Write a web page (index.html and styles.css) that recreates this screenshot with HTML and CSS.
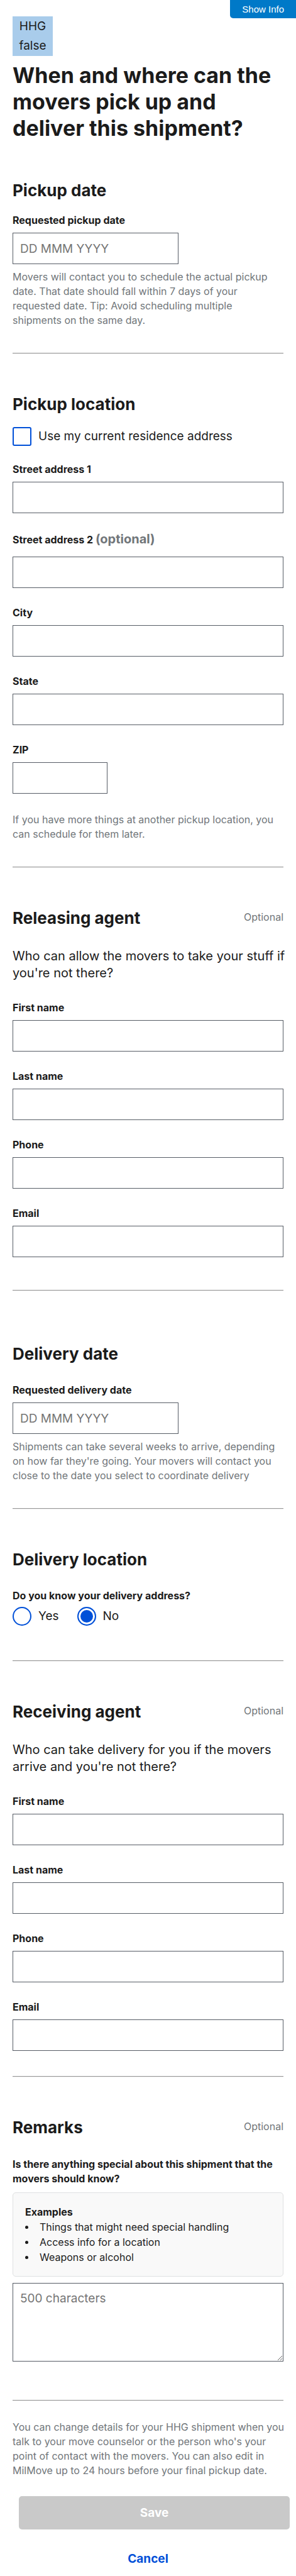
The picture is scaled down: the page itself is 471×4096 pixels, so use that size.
FILE: index.html
```html
<!DOCTYPE html>
<html lang="en">
<head>
<meta charset="utf-8">
<meta name="viewport" content="width=device-width, initial-scale=1">
<title>Shipment details</title>
<link rel="stylesheet" href="styles.css">
</head>
<body>
<button type="button" class="show-info">Show Info</button>
<main class="page">
  <div class="tag"><span>HHG</span><span>false</span></div>
  <h1 class="title">When and where can the movers pick up and deliver this shipment?</h1>
  <form class="form">
    <section class="section section-first">
      <h2 class="heading">Pickup date</h2>
      <div class="field field-tight">
        <label class="label" for="pickup-date">Requested pickup date</label>
        <input class="input input-date" id="pickup-date" type="text" placeholder="DD MMM YYYY">
      </div>
      <p class="hint">Movers will contact you to schedule the actual pickup date. That date should fall within 7 days of your requested date. Tip: Avoid scheduling multiple shipments on the same day.</p>
    </section>
    <hr class="rule">
    <section class="section">
      <h2 class="heading">Pickup location</h2>
      <div class="choice choice-check">
        <input class="check" id="use-current" type="checkbox">
        <label class="choice-label" for="use-current">Use my current residence address</label>
      </div>
      <div class="field">
        <label class="label" for="street1">Street address 1</label>
        <input class="input" id="street1" type="text">
      </div>
      <div class="field">
        <label class="label label-optional" for="street2">Street address 2 <span class="optional-inline">(optional)</span></label>
        <input class="input" id="street2" type="text">
      </div>
      <div class="field">
        <label class="label" for="city">City</label>
        <input class="input" id="city" type="text">
      </div>
      <div class="field">
        <label class="label" for="state">State</label>
        <input class="input" id="state" type="text">
      </div>
      <div class="field">
        <label class="label" for="zip">ZIP</label>
        <input class="input input-zip" id="zip" type="text">
      </div>
      <p class="hint hint-spaced">If you have more things at another pickup location, you can schedule for them later.</p>
    </section>
    <hr class="rule">
    <section class="section">
      <div class="heading-row">
        <h2 class="heading">Releasing agent</h2>
        <span class="optional">Optional</span>
      </div>
      <p class="lead">Who can allow the movers to take your stuff if you're not there?</p>
      <div class="field">
        <label class="label" for="rel-first">First name</label>
        <input class="input" id="rel-first" type="text">
      </div>
      <div class="field">
        <label class="label" for="rel-last">Last name</label>
        <input class="input" id="rel-last" type="text">
      </div>
      <div class="field">
        <label class="label" for="rel-phone">Phone</label>
        <input class="input" id="rel-phone" type="tel">
      </div>
      <div class="field">
        <label class="label" for="rel-email">Email</label>
        <input class="input" id="rel-email" type="email">
      </div>
    </section>
    <hr class="rule rule-agent">
    <section class="section section-far">
      <h2 class="heading">Delivery date</h2>
      <div class="field field-loose">
        <label class="label" for="delivery-date">Requested delivery date</label>
        <input class="input input-date" id="delivery-date" type="text" placeholder="DD MMM YYYY">
      </div>
      <p class="hint">Shipments can take several weeks to arrive, depending on how far they're going. Your movers will contact you close to the date you select to coordinate delivery</p>
    </section>
    <hr class="rule">
    <section class="section">
      <h2 class="heading">Delivery location</h2>
      <fieldset class="choices">
        <legend class="label">Do you know your delivery address?</legend>
        <div class="choice-row">
          <div class="choice">
            <input class="radio" id="know-yes" type="radio" name="know">
            <label class="choice-label" for="know-yes">Yes</label>
          </div>
          <div class="choice">
            <input class="radio" id="know-no" type="radio" name="know" checked>
            <label class="choice-label" for="know-no">No</label>
          </div>
        </div>
      </fieldset>
    </section>
    <hr class="rule rule-choices">
    <section class="section">
      <div class="heading-row">
        <h2 class="heading">Receiving agent</h2>
        <span class="optional">Optional</span>
      </div>
      <p class="lead">Who can take delivery for you if the movers arrive and you're not there?</p>
      <div class="field">
        <label class="label" for="rec-first">First name</label>
        <input class="input" id="rec-first" type="text">
      </div>
      <div class="field">
        <label class="label" for="rec-last">Last name</label>
        <input class="input" id="rec-last" type="text">
      </div>
      <div class="field">
        <label class="label" for="rec-phone">Phone</label>
        <input class="input" id="rec-phone" type="tel">
      </div>
      <div class="field">
        <label class="label" for="rec-email">Email</label>
        <input class="input" id="rec-email" type="email">
      </div>
    </section>
    <hr class="rule">
    <section class="section">
      <div class="heading-row">
        <h2 class="heading">Remarks</h2>
        <span class="optional">Optional</span>
      </div>
      <div class="remarks">
        <label class="label" for="remarks">Is there anything special about this shipment that the movers should know?</label>
        <div class="examples">
          <strong>Examples</strong>
          <ul class="examples-list">
            <li>Things that might need special handling</li>
            <li>Access info for a location</li>
            <li>Weapons or alcohol</li>
          </ul>
        </div>
        <textarea class="input textarea" id="remarks" placeholder="500 characters"></textarea>
      </div>
    </section>
    <hr class="rule rule-last">
    <p class="hint hint-spaced hint-wide">You can change details for your HHG shipment when you talk to your move counselor or the person who's your point of contact with the movers. You can also edit in MilMove up to 24 hours before your final pickup date.</p>
    <div class="actions">
      <button class="button button-save" type="submit" disabled>Save</button>
      <button class="button button-cancel" type="button">Cancel</button>
    </div>
  </form>
</main>
</body>
</html>
```
FILE: styles.css
```css
*, *::before, *::after { box-sizing: border-box; }

body {
  margin: 0;
  background: #fff;
  color: #1b1b1b;
  font-family: Inter, "Liberation Sans", sans-serif;
  font-size: 16px;
  line-height: 23px;
}

h1, h2, p, ul, fieldset { margin: 0; padding: 0; }

.page { padding: 26px 20px 0; }

.show-info {
  position: absolute;
  top: 0;
  right: 0;
  height: 29px;
  padding: 0 19px;
  border: 0;
  border-radius: 0 0 0 5px;
  background: #0079c8;
  color: #fff;
  font: 15px "Liberation Sans", Arial, sans-serif;
}

.tag {
  display: flex;
  flex-direction: column;
  align-items: center;
  width: 64px;
  padding-bottom: 1px;
  background: #a9cceb;
  font-size: 19px;
  line-height: 31px;
}

.title {
  margin-top: 10px;
  font-size: 34px;
  font-weight: 700;
  line-height: 42px;
}

.section { padding-top: 64px; }
.section-first { padding-top: 62px; }
.section-far { padding-top: 84px; }

.heading {
  font-size: 26px;
  font-weight: 700;
  line-height: 31px;
}

.heading-row {
  display: flex;
  justify-content: space-between;
}

.optional { color: #71767a; line-height: 29px; }

.rule {
  height: 2px;
  margin: 40px 0 0;
  border: 0;
  border-top: 1px solid #979797;
  border-bottom: 1px solid #ededed;
}
.rule-agent { margin-top: 52px; }
.rule-choices { margin-top: 55px; }
.rule-last { margin-top: 61px; }

.field { margin-top: 28px; }
.field-tight { margin-top: 21px; }
.field-loose { margin-top: 31px; }

.label {
  display: block;
  margin-bottom: 8px;
  padding: 0;
  font-weight: 700;
}
.label-optional { margin-bottom: 13px; line-height: 27px; }
.optional-inline { color: #71767a; font-size: 20px; }

.input {
  display: block;
  width: 100%;
  height: 50px;
  padding: 0 11px;
  border: 1px solid #565c65;
  border-radius: 0;
  background: #fff;
  color: #1b1b1b;
  font-family: inherit;
  font-size: 19px;
}
.input::placeholder { color: #757575; opacity: 1; }
.input-date { max-width: 264px; }
.input-zip { max-width: 151px; }

.hint { margin-top: 9px; color: #71767a; }
.hint-spaced { margin-top: 30px; }
.hint-wide { margin-right: -10px; }

.lead {
  margin: 32px -10px 30px 0;
  font-size: 20px;
  line-height: 27px;
}
.lead + .field { margin-top: 0; }

.choice {
  display: flex;
  align-items: center;
  gap: 11px;
}
.choice-check { margin: 21px 0 26px; }
.choice-check + .field { margin-top: 0; }
.choice-label { font-size: 19px; line-height: 30px; }

.check, .radio {
  appearance: none;
  flex: none;
  width: 30px;
  height: 30px;
  margin: 0;
  border: 2px solid #0050d8;
  background: #fff;
}
.check { border-radius: 3px; }
.radio { border-radius: 50%; }
.radio:checked {
  background: #0050d8;
  box-shadow: inset 0 0 0 3px #fff;
}

.choices { margin-top: 31px; border: 0; }
.choices .label { margin-bottom: 6px; }
.choice-row { display: flex; gap: 29px; }

.remarks {
  display: flex;
  flex-direction: column;
  gap: 10px;
  margin-top: 32px;
}
.remarks .label { margin: 0; }

.examples {
  padding: 19px 19px 18px;
  border: 1px solid #dfe1e2;
  border-radius: 5px;
  background: #f9f9f9;
}
.examples-list {
  line-height: 24px;
  list-style: none;
}
.examples-list li {
  display: flex;
  align-items: center;
  gap: 18px;
}
.examples-list li::before {
  content: "";
  width: 5px;
  height: 5px;
  border-radius: 50%;
  background: #1b1b1b;
}

.textarea {
  height: 125px;
  padding: 10px 11px;
  line-height: 27px;
  resize: vertical;
}

.actions {
  display: flex;
  flex-direction: column;
  gap: 20px;
  margin-top: 29px;
}

.button {
  height: 53px;
  padding: 0;
  border: 0;
  border-radius: 5px;
  font-family: inherit;
  font-size: 19px;
  font-weight: 700;
}
.button-save {
  margin: 0 -10px 0 10px;
  background: #c9c9c9;
  color: #fff;
}
.button-cancel { background: transparent; color: #0050d8; }
```
